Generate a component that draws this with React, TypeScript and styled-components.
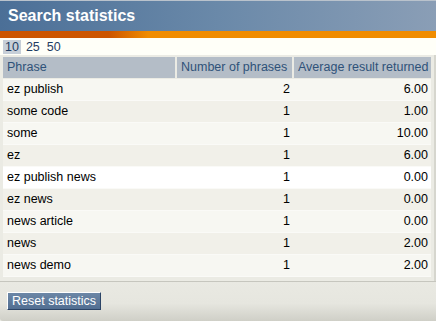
import React from 'react';
import styled, { createGlobalStyle } from 'styled-components';

const GlobalStyle = createGlobalStyle`
  body {
    margin: 0;
    background: #ffffff;
    font-family: "Liberation Sans", Arial, sans-serif;
  }
`;

const Panel = styled.div`
  width: 436px;
  height: 321px;
  display: flex;
  flex-direction: column;
  background-color: #ebebe4;
  overflow: hidden;
  box-shadow: inset -2px 0 0 #d6d6ce;
`;

const TitleBar = styled.div`
  height: 31px;
  display: flex;
  align-items: center;
  padding-left: 8px;
  background: linear-gradient(to right, #4b6f97 0%, #6a89a9 50%, #8a9eb6 100%);
  color: #ffffff;
  font-size: 16px;
  font-weight: bold;
  border-top: 1px solid #b9c2cc;
  box-sizing: border-box;
`;

const Stripe = styled.div`
  height: 7px;
  background: linear-gradient(to right, #cc5500 0%, #cc5500 25%, #f08c00 34%, #f08c00 100%);
`;

const Pager = styled.div`
  height: 17px;
  display: flex;
  align-items: center;
  gap: 3px;
  padding-left: 3px;
  background-color: #fffff8;
  margin-bottom: 2px;
`;

const PageLink = styled.span<{ $active?: boolean }>`
  display: inline-flex;
  align-items: center;
  height: 12px;
  padding: 1px 2px;
  font-size: 12.5px;
  color: #1f3d63;
  background-color: ${(p) => (p.$active ? '#c7cfd8' : 'transparent')};
`;

const Body = styled.div`
  padding: 0 5px 0 3px;
`;

const Table = styled.table`
  width: 428px;
  border-collapse: collapse;
  table-layout: fixed;
  font-size: 12.5px;
`;

const Th = styled.th<{ $last?: boolean }>`
  box-sizing: border-box;
  height: 21px;
  padding: 0 0 0 4px;
  text-align: left;
  font-weight: normal;
  color: #2f5279;
  background-color: #b4bdc7;
  border-right: ${(p) => (p.$last ? '0' : '2px solid #ebebe4')};
  border-bottom: 1px solid #ebebe4;
  white-space: nowrap;
  overflow: hidden;
`;

const Row = styled.tr<{ $tone: 'light' | 'dark' | 'white' }>`
  background-color: ${(p) =>
    p.$tone === 'white' ? '#ffffff' : p.$tone === 'dark' ? '#f1f0e9' : '#f7f7f2'};
  border-bottom: 1px solid #fafaf7;
`;

const Td = styled.td<{ $num?: boolean }>`
  box-sizing: border-box;
  height: 22px;
  padding: ${(p) => (p.$num ? '0 3px 0 0' : '0 0 0 4px')};
  text-align: ${(p) => (p.$num ? 'right' : 'left')};
  color: #000000;
  white-space: nowrap;
`;

const Footer = styled.div`
  margin-top: 4px;
  flex: 1;
  border-top: 1px solid #c6c6be;
  background: linear-gradient(to bottom, #e9e9e2 0%, #e6e6df 55%, #cfcfc7 100%);
  padding: 9px 0 0 7px;
  border-bottom-left-radius: 3px;
`;

const ResetButton = styled.button`
  height: 18px;
  padding: 0 4px;
  font-family: "Liberation Sans", Arial, sans-serif;
  font-size: 12.5px;
  color: #ffffff;
  background: linear-gradient(to bottom, #6c87a6, #526f92);
  border: 1px solid;
  border-color: #ffffff #2c4466 #2c4466 #ffffff;
  cursor: pointer;
`;

const columns = [
  { label: 'Phrase', width: 173 },
  { label: 'Number of phrases', width: 117 },
  { label: 'Average result returned', width: 138 },
];

const rows = [
  { phrase: 'ez publish', count: 2, avg: '6.00' },
  { phrase: 'some code', count: 1, avg: '1.00' },
  { phrase: 'some', count: 1, avg: '10.00' },
  { phrase: 'ez', count: 1, avg: '6.00' },
  { phrase: 'ez publish news', count: 1, avg: '0.00' },
  { phrase: 'ez news', count: 1, avg: '0.00' },
  { phrase: 'news article', count: 1, avg: '0.00' },
  { phrase: 'news', count: 1, avg: '2.00' },
  { phrase: 'news demo', count: 1, avg: '2.00' },
];

function App() {
  return (
    <>
      <GlobalStyle />
      <Panel>
        <TitleBar>Search statistics</TitleBar>
        <Stripe />
        <Pager>
          <PageLink $active>10</PageLink>
          <PageLink>25</PageLink>
          <PageLink>50</PageLink>
        </Pager>
        <Body>
          <Table>
            <colgroup>
              {columns.map((c) => (
                <col key={c.label} width={c.width} />
              ))}
            </colgroup>
            <thead>
              <tr>
                {columns.map((c, i) => (
                  <Th key={c.label} $last={i === columns.length - 1}>
                    {c.label}
                  </Th>
                ))}
              </tr>
            </thead>
            <tbody>
              {rows.map((r, i) => (
                <Row key={r.phrase} $tone={i === 4 ? 'white' : i % 2 === 0 ? 'light' : 'dark'}>
                  <Td>{r.phrase}</Td>
                  <Td $num>{r.count}</Td>
                  <Td $num>{r.avg}</Td>
                </Row>
              ))}
            </tbody>
          </Table>
        </Body>
        <Footer>
          <ResetButton type="button">Reset statistics</ResetButton>
        </Footer>
      </Panel>
    </>
  );
}

export default App;
